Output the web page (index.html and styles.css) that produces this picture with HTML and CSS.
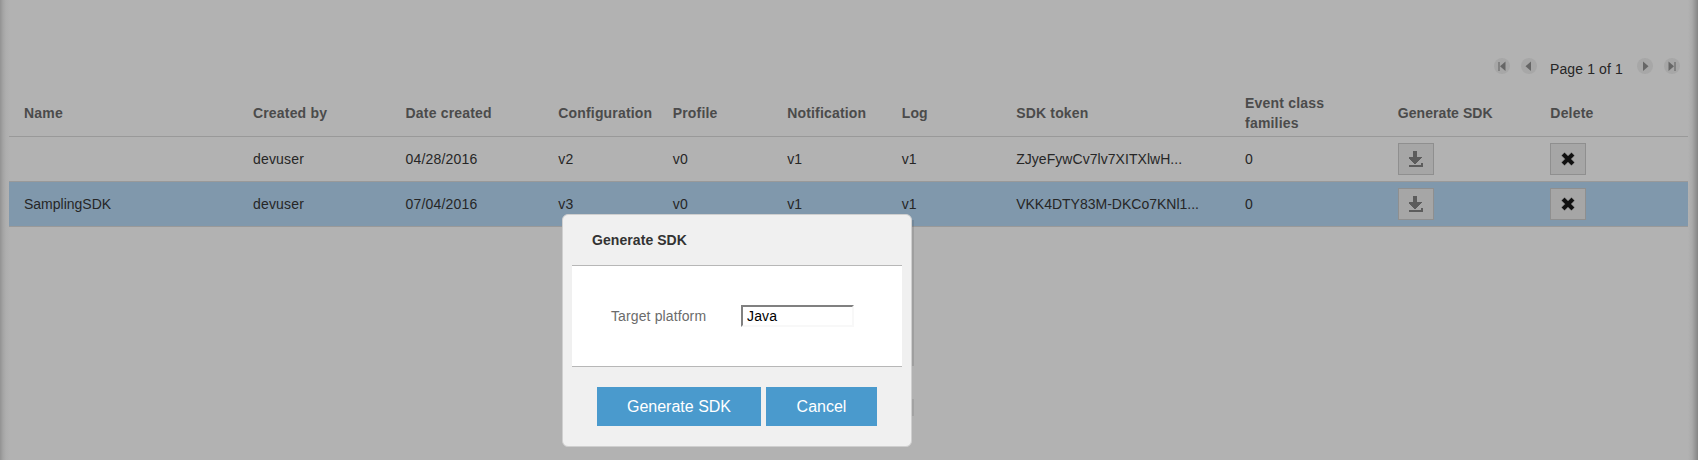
FILE: index.html
```html
<!DOCTYPE html>
<html lang="en">
<head>
<meta charset="utf-8">
<title>Generate SDK</title>
<link rel="stylesheet" href="styles.css">
</head>
<body>
<svg class="defs" width="0" height="0" aria-hidden="true">
  <symbol id="prev" viewBox="0 0 16 16"><circle cx="8" cy="8" r="8" fill="#a7a7a7"/><path d="M10 3.500v9.500L4.500 8.300z" fill="#666"/></symbol>
  <symbol id="first" viewBox="0 0 16 16"><circle cx="8" cy="8" r="8" fill="#a7a7a7"/><path d="M11.500 3.500v9.500L6 8.300z" fill="#666"/><path d="M4 4h2v9H4z" fill="#828282"/></symbol>
  <symbol id="download" viewBox="0 0 14 16"><path d="M4 0h4v6h5v1h-1v1h-1v1h-1v1H9v1H8v1H7v1H5v-1H4v-1H3v-1H2V9H1V8H0V6h4zM0 14h12v-2h2v4H0z" fill="#5c5c5c"/></symbol>
  <symbol id="cross" viewBox="0 0 14 14"><path d="M3.600 3.600l6.800 6.800M10.400 3.600l-6.800 6.800" stroke="#8a8a8a" stroke-width="5.200" stroke-linecap="square"/><path d="M3.500 3.500l7 7M10.500 3.500l-7 7" stroke="#111" stroke-width="3.900" stroke-linecap="square"/></symbol>
</svg>
<main class="page">
  <nav class="pager">
    <svg class="pager-icon"><use href="#first"/></svg>
    <svg class="pager-icon"><use href="#prev"/></svg>
    <span class="pager-text">Page 1 of 1</span>
    <svg class="pager-icon flip"><use href="#prev"/></svg>
    <svg class="pager-icon flip"><use href="#first"/></svg>
  </nav>
  <section class="table">
    <div class="row head">
      <div>Name</div><div>Created by</div><div>Date created</div><div>Configuration</div><div>Profile</div><div>Notification</div><div>Log</div><div>SDK token</div><div class="wrap">Event class families</div><div class="snug">Generate SDK</div><div>Delete</div>
    </div>
    <div class="row">
      <div></div><div>devuser</div><div>04/28/2016</div><div>v2</div><div>v0</div><div>v1</div><div>v1</div><div class="token">ZJyeFywCv7lv7XITXlwH...</div><div>0</div>
      <div><button class="tool" aria-label="Generate SDK"><svg class="download"><use href="#download"/></svg></button></div>
      <div><button class="tool" aria-label="Delete"><svg class="cross"><use href="#cross"/></svg></button></div>
    </div>
    <div class="row selected">
      <div class="tight">SamplingSDK</div><div>devuser</div><div>07/04/2016</div><div>v3</div><div>v0</div><div>v1</div><div>v1</div><div class="tight">VKK4DTY83M-DKCo7KNl1...</div><div>0</div>
      <div><button class="tool" aria-label="Generate SDK"><svg class="download"><use href="#download"/></svg></button></div>
      <div><button class="tool" aria-label="Delete"><svg class="cross"><use href="#cross"/></svg></button></div>
    </div>
  </section>
</main>
<div class="dialog" role="dialog">
  <h2 class="dialog-title snug">Generate SDK</h2>
  <div class="dialog-body">
    <label class="label" for="platform">Target platform</label>
    <input class="field" id="platform" value="Java">
  </div>
  <div class="dialog-actions">
    <button class="action primary">Generate SDK</button>
    <button class="action secondary">Cancel</button>
  </div>
</div>
</body>
</html>
```
FILE: styles.css
```css
* { box-sizing: border-box; }
body {
  margin: 0;
  height: 460px;
  overflow: hidden;
  position: relative;
  background: #b2b2b2;
  font: 14px/20px "Liberation Sans", Arial, sans-serif;
  letter-spacing: .18px;
  color: #262626;
}
.defs { display: none; }
.page {
  height: 460px;
  padding: 58px 10px 0 9px;
  background:
    linear-gradient(to right, #929292, #a4a4a4 3px, #aeaeae 6px, rgba(178,178,178,0) 10px) left / 10px 100% no-repeat,
    linear-gradient(to left, #858585, #979797 3px, #a9a9a9 6px, rgba(178,178,178,0) 10px) right / 10px 100% no-repeat;
}
.pager {
  display: flex;
  justify-content: flex-end;
  height: 35px;
  padding-right: 8px;
}
.pager-icon { width: 16px; height: 16px; margin-right: 11px; }
.pager-icon:last-child { margin-right: 0; }
.pager-text { width: 78px; padding-left: 2px; margin-right: 11px; line-height: 22px; letter-spacing: .12px; white-space: nowrap; }
.flip { transform: scaleX(-1); }
.row {
  display: grid;
  grid-template-columns: 3fr 2fr 2fr 1.5fr 1.5fr 1.5fr 1.5fr 3fr 2fr 2fr 2fr;
  align-items: center;
  height: 45px;
  border-bottom: 1px solid #999;
}
.row > div { padding-left: 15px; min-width: 0; white-space: nowrap; }
.head { height: 44px; padding-bottom: 3px; font-weight: bold; color: #4b4b4b; }
.head > .wrap { white-space: normal; padding-right: 40px; }
.tight { letter-spacing: 0; }
.token { letter-spacing: .05px; }
.snug { letter-spacing: .07px; }
.selected { background: #8098ac; }
.tool {
  display: flex;
  align-items: center;
  justify-content: center;
  width: 36px;
  height: 32px;
  padding: 0;
  border: 1px solid #8f8f8f;
  background: #a6a6a6;
}
.download { width: 14px; height: 16px; }
.cross { width: 14px; height: 14px; }
.dialog {
  position: absolute;
  left: 562px;
  top: 214px;
  width: 350px;
  height: 233px;
  padding: 0 9px;
  border: 1px solid #cfcfcf;
  border-radius: 6px;
  background: #f0f0f0;
}
.dialog::before, .dialog::after {
  content: "";
  position: absolute;
  left: 349px;
  width: 2px;
  background: #a3a3a3;
}
.dialog::before { top: 5px; height: 146px; background: rgba(0,0,0,.1); }
.dialog::after { top: 184px; height: 17px; }
.dialog-title { margin: 0; height: 50px; padding: 15px 0 0 20px; font-size: 14px; line-height: 20px; color: #333; }
.dialog-body {
  display: flex;
  align-items: center;
  height: 102px;
  padding-left: 39px;
  background: #fff;
  border-top: 1px solid #b7b7b7;
  border-bottom: 1px solid #b7b7b7;
}
.label { width: 130px; color: #6b6b6b; letter-spacing: .12px; }
.field {
  width: 113px;
  height: 22px;
  padding: 0 4px;
  border: 2px solid;
  border-color: #808080 #f8f8f8 #f8f8f8 #808080;
  border-radius: 0;
  background: #fff;
  color: #000;
  font: inherit;
  letter-spacing: .15px;
  outline: 0;
}
.dialog-actions { display: flex; justify-content: center; gap: 5px; padding-top: 20px; }
.action {
  height: 39px;
  padding: 0;
  border: 0;
  border-radius: 0;
  background: #4a9acd;
  color: #fff;
  font: 16px "Liberation Sans", Arial, sans-serif;
}
.primary { width: 164px; }
.secondary { width: 111px; }
```
